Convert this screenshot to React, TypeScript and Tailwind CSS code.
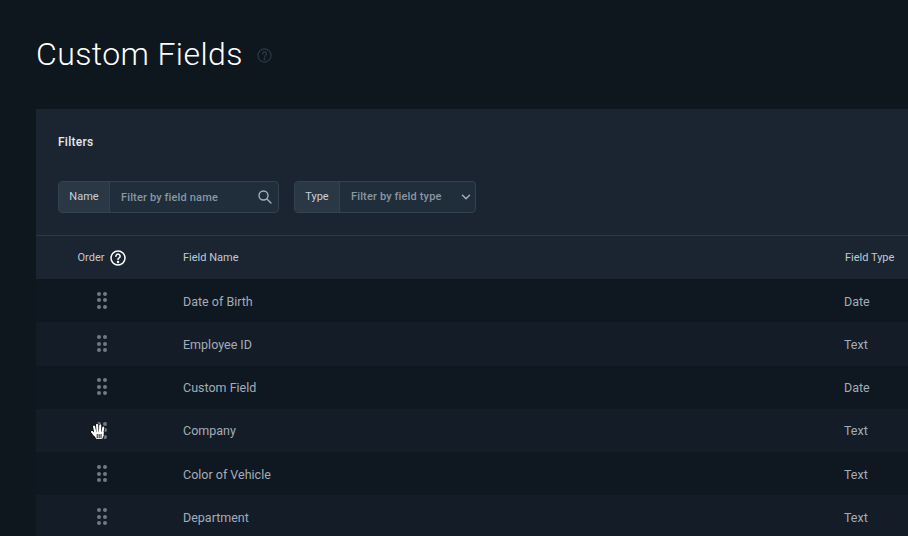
import { ChevronDown } from "lucide-react";

const rows = [
  { name: "Date of Birth", type: "Date" },
  { name: "Employee ID", type: "Text" },
  { name: "Custom Field", type: "Date" },
  { name: "Company", type: "Text" },
  { name: "Color of Vehicle", type: "Text" },
  { name: "Department", type: "Text" },
];

const fingers = [
  "M4.500 9 3.500 4",
  "M6.600 9 6.200 2.500",
  "M8.800 9 9 3",
  "M10.900 9.500 11.700 5",
  "M4 11.500 1.700 8.800",
];

function HelpIcon({ size, color, width }: { size: number; color: string; width: number }) {
  return (
    <svg width={size} height={size} viewBox="0 0 16 16" fill="none" stroke={color} strokeWidth={width} strokeLinecap="round">
      <circle cx="8" cy="8" r="7" />
      <path d="M5.900 6.200a2.100 2.100 0 1 1 3.300 1.750C8.500 8.450 8 8.800 8 9.600" />
      <circle cx="8" cy="11.900" r="0.5" fill={color} />
    </svg>
  );
}

function SearchIcon() {
  return (
    <svg width="14" height="14" viewBox="0 0 14 14" fill="none" stroke="#a6afb9" strokeWidth="1.400" strokeLinecap="round">
      <circle cx="5.500" cy="5.500" r="4.500" />
      <path d="M8.900 8.900 13 13" />
    </svg>
  );
}

function DragDots() {
  return (
    <div className="grid grid-cols-2 gap-x-[2px] gap-y-[2.5px]">
      {[0, 1, 2, 3, 4, 5].map((i) => (
        <span key={i} className="h-1 w-1 rounded-full bg-[#6f7a87]" />
      ))}
    </div>
  );
}

function HandCursor() {
  return (
    <svg width="16" height="18" viewBox="0 0 14 16" fill="none" strokeLinecap="round" className="absolute left-[-7px] top-[0px]">
      {fingers.map((d) => (
        <path key={d} d={d} stroke="#000" strokeWidth="3" />
      ))}
      <path d="M3 8.500h9.500V12l-1.500 3.500H5.500L3 12Z" fill="#fff" stroke="#000" strokeWidth="0.8" />
      {fingers.map((d) => (
        <path key={d} d={d} stroke="#fff" strokeWidth="1.900" />
      ))}
      <path d="M6.300 11v3M8 11v3M9.700 11v3" stroke="#000" strokeWidth="0.8" />
    </svg>
  );
}

export default function App() {
  return (
    <div className="h-[536px] w-[908px] overflow-hidden bg-[#0e161e] pl-9 font-['Roboto','Liberation_Sans',sans-serif]">
      <div className="flex h-[109px] items-start gap-[14px] pt-[34px]">
        <h1 className="text-[32px] font-light leading-[40px] tracking-[0.4px] text-white">Custom Fields</h1>
        <div className="mt-[14px]">
          <HelpIcon size={15} color="#2b3a49" width={1.3} />
        </div>
      </div>

      <div className="bg-[#1a2531]">
        <div className="h-[127px] border-b border-[#2c3947] pl-[22px]">
          <div className="pt-[25px] text-xs font-medium leading-[16px] tracking-[0.25px] text-[#e6eaee]">Filters</div>
          <div className="mt-[31px] flex gap-[15px]">
            <div className="flex h-8 w-[221px] rounded border border-[#34424f] bg-[#202d3a]">
              <div className="flex w-[51px] items-center justify-center border-r border-[#34424f] bg-[#2a3846] text-[11px] text-[#c9d0d7]">Name</div>
              <div className="flex flex-1 items-center justify-between pl-[11px] pr-[6px]">
                <span className="pt-[2px] text-[11px] font-medium tracking-[0.15px] text-[#8a96a3]">Filter by field name</span>
                <SearchIcon />
              </div>
            </div>
            <div className="flex h-8 w-[182px] rounded border border-[#34424f] bg-[#202d3a]">
              <div className="flex w-[45px] items-center justify-center border-r border-[#34424f] bg-[#2a3846] text-[11px] text-[#c9d0d7]">Type</div>
              <div className="flex flex-1 items-center justify-between pl-[11px] pr-[2px]">
                <span className="text-[11px] font-medium tracking-[0.15px] text-[#8a96a3]">Filter by field type</span>
                <ChevronDown size={14} strokeWidth={2.5} className="text-[#a6afb9]" />
              </div>
            </div>
          </div>
        </div>

        <div className="flex h-[43px] items-center pt-[2px] text-[11px] text-[#c3cad1]">
          <div className="flex w-[147px] items-center justify-center gap-[6px] pr-[15px]">
            <span>Order</span>
            <span className="mb-[2px]">
              <HelpIcon size={16} color="#ffffff" width={1.5} />
            </span>
          </div>
          <div className="w-[662px]">Field Name</div>
          <div>Field Type</div>
        </div>
      </div>

      {rows.map((row, i) => (
        <div key={row.name} className={`flex h-[43.3px] items-center pt-[2.5px] text-[12.5px] text-[#a3adb8] ${i % 2 === 0 ? "bg-[#0f1721]" : "bg-[#141d27]"}`}>
          <div className="flex w-[147px] justify-center pb-[3px] pr-[16px]">
            <div className="relative">
              <DragDots />
              {row.name === "Company" && <HandCursor />}
            </div>
          </div>
          <div className="w-[661px]">{row.name}</div>
          <div>{row.type}</div>
        </div>
      ))}
    </div>
  );
}
